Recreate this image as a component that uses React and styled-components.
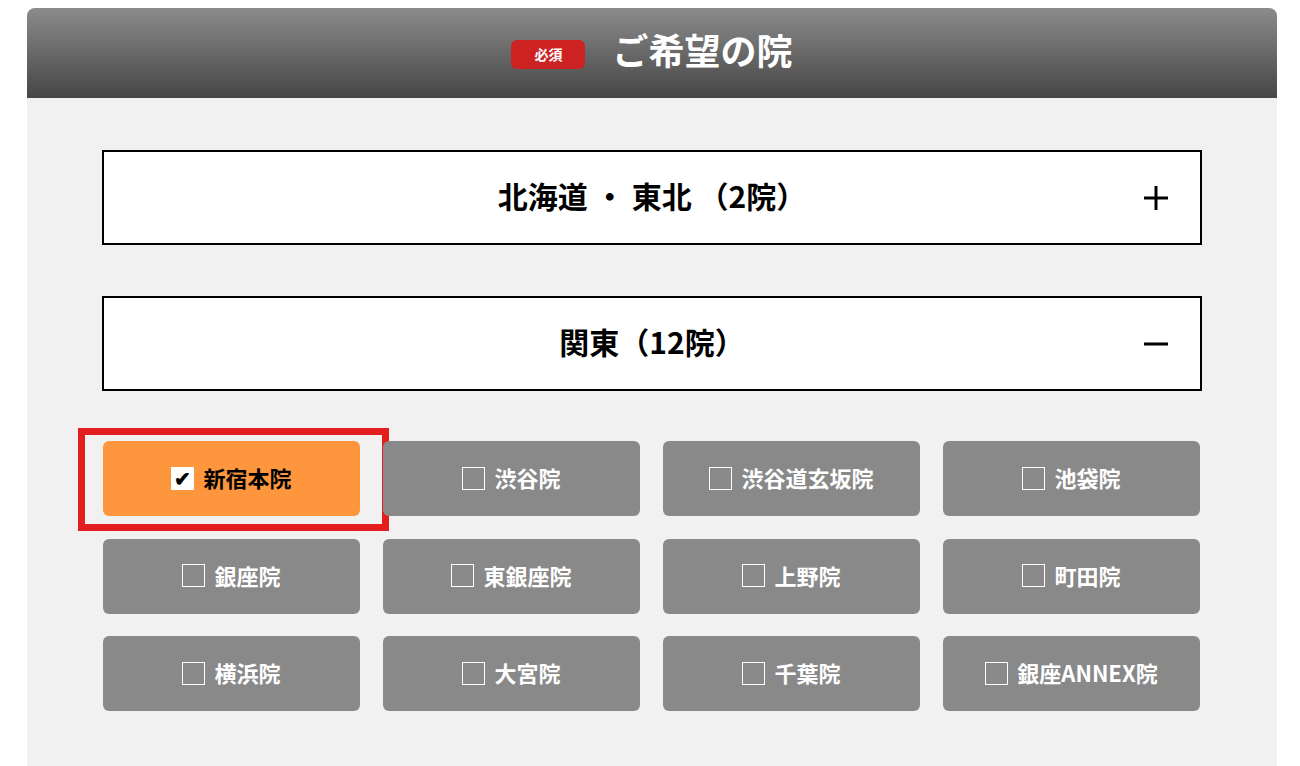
import React, { useState } from 'react'
import styled, { createGlobalStyle } from 'styled-components'

const GlobalStyle = createGlobalStyle`
  html, body {
    margin: 0;
    padding: 0;
    background: #fff;
  }
  body {
    font-family: "Noto Sans CJK JP", "Noto Sans", sans-serif;
  }
`

const Page = styled.div`
  padding: 8px 23px 0 27px;
  height: 766px;
  box-sizing: border-box;
  overflow: hidden;
`

const Panel = styled.section`
  width: 1250px;
  background: #f1f1f1;
  border-radius: 8px 8px 0 0;
  min-height: 758px;
`

const Header = styled.header`
  height: 90px;
  border-radius: 8px 8px 0 0;
  background: linear-gradient(to bottom, #8b8b8b, #464646);
  display: flex;
  align-items: center;
  justify-content: center;
  gap: 27px;
`

const Badge = styled.span`
  width: 74px;
  height: 29px;
  border-radius: 6px;
  background: #cc2222;
  color: #fff;
  font-size: 14px;
  font-weight: 700;
  display: flex;
  align-items: center;
  justify-content: center;
  margin-top: 2px;
`

const Title = styled.h2`
  margin: 0 0 6px;
  color: #fff;
  font-size: 36px;
  line-height: 1.2;
  font-weight: 700;
`

const Body = styled.div`
  padding: 52px 75px 0;
  display: flex;
  flex-direction: column;
  gap: 51px;
`

const AccordionHead = styled.div`
  height: 95px;
  box-sizing: border-box;
  border: 2px solid #000;
  background: #fff;
  display: flex;
  align-items: center;
  justify-content: center;
  padding-bottom: 5px;
  position: relative;
  font-size: 30px;
  font-weight: 700;
  color: #000;
  cursor: pointer;
`

const Dot = styled.span`
  margin: 0 7px;
`

const Toggle = styled.svg`
  position: absolute;
  right: 31px;
  top: 50%;
  transform: translateY(-50%);
`

const Grid = styled.div`
  display: grid;
  grid-template-columns: repeat(4, 1fr);
  column-gap: 23px;
  row-gap: 22.5px;
  margin-top: -1px;
  padding-left: 1px;
  width: 1097px;
`

const Cell = styled.div`
  position: relative;
`

const Highlight = styled.div`
  position: absolute;
  left: -25px;
  top: -13px;
  right: -29px;
  bottom: -15px;
  border: 7px solid #e41e1e;
  pointer-events: none;
`

const ClinicButton = styled.label`
  height: 75px;
  border-radius: 6px;
  background: ${p => (p.$checked ? '#fd963c' : '#898989')};
  color: ${p => (p.$checked ? '#000' : '#fff')};
  display: flex;
  align-items: center;
  justify-content: center;
  gap: 9px;
  padding-bottom: 3px;
  box-sizing: border-box;
  font-size: 22px;
  font-weight: 700;
  cursor: pointer;
`

const Box = styled.span`
  width: 23px;
  height: 23px;
  box-sizing: border-box;
  border: ${p => (p.$checked ? 'none' : '1px solid #fff')};
  background: ${p => (p.$checked ? '#fff' : 'transparent')};
  display: flex;
  align-items: center;
  justify-content: center;
  color: #000;
  font-size: 20px;
  line-height: 1;
  margin-top: 2px;
`

const regions = [
  { name: '北海道・東北 （2院）', open: false },
  { name: '関東（12院）', open: true },
]

const clinics = [
  '新宿本院', '渋谷院', '渋谷道玄坂院', '池袋院',
  '銀座院', '東銀座院', '上野院', '町田院',
  '横浜院', '大宮院', '千葉院', '銀座ANNEX院',
]

function PlusMinus({ open }) {
  return (
    <Toggle width="26" height="26" viewBox="0 0 26 26">
      <rect x="1" y="11.5" width="24" height="3" fill="#000" />
      {!open && <rect x="11.5" y="1" width="3" height="24" fill="#000" />}
    </Toggle>
  )
}

function RegionName({ name }) {
  const parts = name.split('・')
  return parts.map((p, i) => (
    <React.Fragment key={i}>
      {i > 0 && <Dot>・</Dot>}
      {p}
    </React.Fragment>
  ))
}

export default function App() {
  const [selected, setSelected] = useState('新宿本院')
  return (
    <Page>
      <GlobalStyle />
      <Panel>
        <Header>
          <Badge>必須</Badge>
          <Title>ご希望の院</Title>
        </Header>
        <Body>
          {regions.map(r => (
            <AccordionHead key={r.name}>
              <span><RegionName name={r.name} /></span>
              <PlusMinus open={r.open} />
            </AccordionHead>
          ))}
          <Grid>
            {clinics.map(c => {
              const checked = c === selected
              return (
                <Cell key={c}>
                  <ClinicButton $checked={checked} onClick={() => setSelected(c)}>
                    <Box $checked={checked}>{checked ? '✔' : ''}</Box>
                    {c}
                  </ClinicButton>
                  {checked && <Highlight />}
                </Cell>
              )
            })}
          </Grid>
        </Body>
      </Panel>
    </Page>
  )
}
